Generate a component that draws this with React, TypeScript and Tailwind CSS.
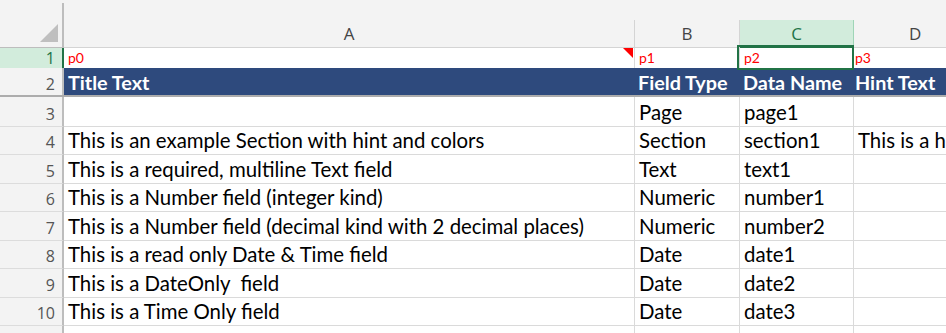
const cols = "grid grid-cols-[64px_571px_105px_114px_1fr]";

const rows = [
  { n: "3", h: "h-[30px]", a: "", b: "Page", c: "page1", d: "" },
  { n: "4", h: "h-[28px]", a: "This is an example Section with hint and colors", b: "Section", c: "section1", d: "This is a hint" },
  { n: "5", h: "h-[29px]", a: "This is a required, multiline Text field", b: "Text", c: "text1", d: "" },
  { n: "6", h: "h-[28px]", a: "This is a Number field (integer kind)", b: "Numeric", c: "number1", d: "" },
  { n: "7", h: "h-[29px]", a: "This is a Number field (decimal kind with 2 decimal places)", b: "Numeric", c: "number2", d: "" },
  { n: "8", h: "h-[28px]", a: "This is a read only Date & Time field", b: "Date", c: "date1", d: "" },
  { n: "9", h: "h-[29px]", a: "This is a DateOnly  field", b: "Date", c: "date2", d: "" },
  { n: "10", h: "h-[28px]", a: "This is a Time Only field", b: "Date", c: "date3", d: "" },
  { n: "", h: "h-[28px]", a: "", b: "", c: "", d: "" },
];

const headFont = "font-['Open_Sans','Noto_Sans',sans-serif]";
const cellFont = "font-['Lato','Liberation_Sans',sans-serif]";

function RowNum({ n, className = "" }: { n: string; className?: string }) {
  return (
    <div
      className={`flex items-end justify-end border-r-2 border-b border-r-[#bdbdbd] border-b-[#dcdcdc] bg-[#f3f3f3] pr-[7px] pb-[4px] text-[16px] leading-none text-[#555] ${headFont} ${className}`}
    >
      {n}
    </div>
  );
}

function Cell({ children, className = "" }: { children?: React.ReactNode; className?: string }) {
  return (
    <div
      className={`flex items-end overflow-visible whitespace-pre border-r border-b border-[#dadada] pl-[4px] pb-[4px] text-[20.4px] leading-none text-black ${cellFont} ${className}`}
    >
      {children}
    </div>
  );
}

export default function App() {
  return (
    <div className="h-[333px] w-[946px] overflow-hidden bg-white">
      {/* strip above column headers */}
      <div className={`${cols} h-[20px] bg-[#f3f3f3]`}>
        <div className="ml-[62px] mt-[3px] w-[2px] bg-[#bdbdbd]" />
      </div>

      {/* column headers */}
      <div className={`${cols} h-[28px] bg-[#f3f3f3] text-[17px] leading-none text-[#444] ${headFont}`}>
        <div className="flex items-end justify-end border-r-2 border-b border-r-[#bdbdbd] border-b-[#bdbdbd] pr-[4px] pb-[5px]">
          <svg width="18" height="18" viewBox="0 0 18 18">
            <polygon points="18,0 18,18 0,18" fill="#bfbfbf" />
          </svg>
        </div>
        <div className="flex items-center justify-center border-r border-b border-[#d4d4d4]">A</div>
        <div className="flex items-center justify-center border-r border-b border-[#d4d4d4]">B</div>
        <div className="flex items-center justify-center border-r border-r-[#9fd5b7] border-b border-b-[#217346] bg-[#d2ecdc] text-[#217346]">
          C
        </div>
        <div className="flex items-center justify-start border-b border-[#d4d4d4] pl-[55px]">D</div>
      </div>

      {/* row 1 */}
      <div className={`${cols} h-[20px]`}>
        <div
          className={`flex items-end justify-end border-r-2 border-r-[#217346] bg-[#d2ecdc] pr-[7px] pb-[2px] text-[16px] leading-none text-[#217346] ${headFont}`}
        >
          1
        </div>
        <div className={`relative flex items-end border-r border-[#dadada] pl-[4px] pb-[3px] text-[14px] leading-none text-[#ff0000] ${cellFont}`}>
          p0
          <svg className="absolute right-[1px] top-0" width="10" height="10" viewBox="0 0 10 10">
            <polygon points="0,0 10,0 10,10" fill="#ff0000" />
          </svg>
        </div>
        <div className={`flex items-end border-r border-[#dadada] pl-[4px] pb-[3px] text-[14px] leading-none text-[#ff0000] ${cellFont}`}>
          p1
        </div>
        <div className={`relative flex items-end border-r border-[#dadada] pl-[4px] pb-[3px] text-[14px] leading-none text-[#ff0000] ${cellFont}`}>
          p2
          <div className="pointer-events-none absolute -left-[3px] -top-[3px] -right-[1px] -bottom-[2px] border-[2.5px] border-[#217346]" />
        </div>
        <div className={`flex items-end pl-[1px] pb-[3px] text-[14px] leading-none text-[#ff0000] ${cellFont}`}>p3</div>
      </div>

      {/* row 2 */}
      <div className={`${cols} h-[27px]`}>
        <div
          className={`flex items-end justify-end border-r-2 border-r-[#bdbdbd] bg-[#f3f3f3] pr-[7px] pb-[3px] text-[16px] leading-none text-[#555] ${headFont}`}
        >
          2
        </div>
        <div className={`col-span-4 grid grid-cols-[571px_105px_114px_1fr] bg-[#2e4a7d] text-[19.8px] font-bold leading-none text-white ${cellFont}`}>
          <div className="flex items-end pl-[4px] pb-[2px]">Title Text</div>
          <div className="flex items-end pl-[3px] pb-[2px]">Field Type</div>
          <div className="flex items-end pl-[3px] pb-[2px]">Data Name</div>
          <div className="flex items-end pl-[1px] pb-[2px]">Hint Text</div>
        </div>
      </div>

      {/* freeze pane line */}
      <div className="h-[2px] bg-[#acacac]" />

      {rows.map((r, i) => (
        <div key={i} className={`${cols} ${r.h}`}>
          <RowNum n={r.n} />
          <Cell>{r.a}</Cell>
          <Cell>{r.b}</Cell>
          <Cell>{r.c}</Cell>
          <Cell className="border-r-0 pl-[1px]">{r.d}</Cell>
        </div>
      ))}
    </div>
  );
}
